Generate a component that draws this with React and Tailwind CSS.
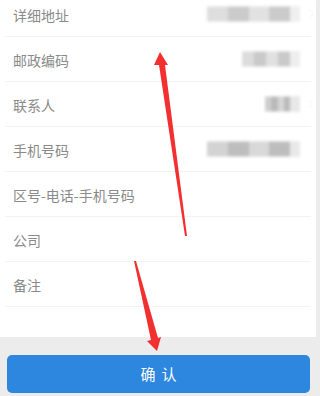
const rows = [
  { label: '详细地址', blur: [[207, 'bg-[#d6d6d6]', 93]], chevron: true },
  { label: '邮政编码', blur: [[242, 'bg-[#d4d4d4]', 58]] },
  { label: '联系人', blur: [[265, 'bg-[#c4c4c4]', 35]], chevron: true },
  { label: '手机号码', blur: [[207, 'bg-[#c8c8c8]', 93]] },
  { label: '区号-电话-手机号码' },
  { label: '公司' },
  { label: '备注' },
]

function Smudge({ left, color, width }) {
  return (
    <div
      className={`absolute top-1/2 -translate-y-1/2 h-[15px] blur-[1.5px] ${color}`}
      style={{ left: left - 5, width }}
    >
      <div className="flex h-full">
        <div className="flex-1 bg-white/20" />
        <div className="flex-1 bg-black/5" />
        <div className="flex-1 bg-white/30" />
        <div className="flex-1 bg-black/5" />
        <div className="w-[10px] bg-white/60" />
      </div>
    </div>
  )
}

export default function App() {
  return (
    <div
      className="relative w-[320px] h-[396px] overflow-hidden bg-[#ececec] flex flex-col"
      style={{ fontFamily: '"Noto Sans CJK SC", "Noto Sans", sans-serif' }}
    >
      <div className="w-[316px] bg-white -mt-[8px] pb-[30px]">
        {rows.map((r) => (
          <div
            key={r.label}
            className="relative mx-[5px] h-[45px] border-b border-[#f3f3f3] flex items-center pl-[8px] text-[14px] text-[#8a8a8a]"
          >
            <span className="mt-[2px]">{r.label}</span>
            {r.blur && r.blur.map(([l, c, w]) => <Smudge key={l} left={l} color={c} width={w} />)}
            {r.chevron && (
              <svg className="absolute right-[-3px] top-1/2 -translate-y-1/2" width="6" height="10" viewBox="0 0 6 10">
                <path d="M1 1l4 4-4 4" fill="none" stroke="#f6f6f6" strokeWidth="1" />
              </svg>
            )}
          </div>
        ))}
      </div>
      <div className="w-[316px] px-[7px] pt-[18px]">
        <button className="w-[303px] h-[38px] rounded-[5px] bg-[#2d87de] text-white text-[15px] tracking-[6px] pl-[6px]">
          确认
        </button>
      </div>

      <svg className="absolute inset-0 pointer-events-none" width="320" height="396" viewBox="0 0 320 396">
        <polygon points="160,52 168,65 165,65 187,236 185,236 159,65 154,65" fill="#f2302f" />
        <polygon points="134,261 136,261 158,338 161,337 157,351 147,341 151,340" fill="#f2302f" />
      </svg>
    </div>
  )
}
